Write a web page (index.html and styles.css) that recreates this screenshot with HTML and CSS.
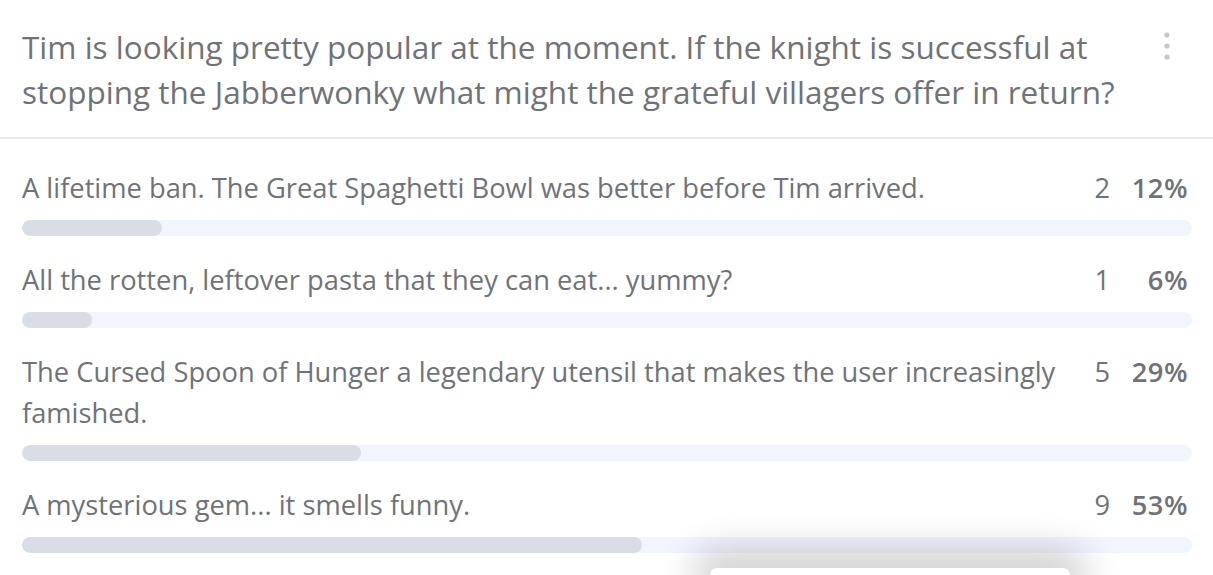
FILE: index.html
```html
<!DOCTYPE html>
<html lang="en">
<head>
<meta charset="utf-8">
<title>Poll</title>
<link rel="stylesheet" href="styles.css">
</head>
<body>
<div class="poll">
  <div class="poll-header">
    <p class="question">Tim is looking pretty popular at the moment. If the knight is successful at stopping the Jabberwonky what might the grateful villagers offer in return?</p>
    <button class="menu" aria-label="More options">
      <svg width="8" height="30" viewBox="0 0 8 30"><circle cx="4" cy="4" r="2.6"/><circle cx="4" cy="15" r="2.6"/><circle cx="4" cy="26" r="2.6"/></svg>
    </button>
  </div>
  <ul class="options">
    <li class="option">
      <div class="option-row">
        <span class="option-text">A lifetime ban. The Great Spaghetti Bowl was better before Tim arrived.</span>
        <span class="count">2</span>
        <span class="pct">12%</span>
      </div>
      <div class="track"><div class="fill" style="width:12%"></div></div>
    </li>
    <li class="option">
      <div class="option-row">
        <span class="option-text">All the rotten, leftover pasta that they can eat... yummy?</span>
        <span class="count">1</span>
        <span class="pct">6%</span>
      </div>
      <div class="track"><div class="fill" style="width:6%"></div></div>
    </li>
    <li class="option">
      <div class="option-row">
        <span class="option-text">The Cursed Spoon of Hunger a legendary utensil that makes the user increasingly famished.</span>
        <span class="count">5</span>
        <span class="pct">29%</span>
      </div>
      <div class="track"><div class="fill" style="width:29%"></div></div>
    </li>
    <li class="option">
      <div class="option-row">
        <span class="option-text">A mysterious gem... it smells funny.</span>
        <span class="count">9</span>
        <span class="pct">53%</span>
      </div>
      <div class="track"><div class="fill" style="width:53%"></div></div>
    </li>
  </ul>
</div>
<div class="popup"></div>
</body>
</html>
```
FILE: styles.css
```css
* { box-sizing: border-box; }
html, body {
  margin: 0;
  padding: 0;
  background: #ffffff;
  height: 100%;
  overflow: hidden;
}
body {
  font-family: "Open Sans", "Liberation Sans", sans-serif;
  color: #6f7378;
  position: relative;
}
.poll-header {
  display: flex;
  align-items: flex-start;
  padding: 24px 20px 23px 22px;
  border-bottom: 2px solid #ebebeb;
}
.question {
  flex: 1;
  margin: 0;
  font-size: 31.5px;
  line-height: 45px;
  max-width: 1110px;
}
.menu {
  margin-left: auto;
  margin-top: 7px;
  border: 0;
  background: none;
  padding: 0 22px 0 0;
  fill: #c3c6ca;
  display: flex;
}
.options {
  list-style: none;
  margin: 0;
  padding: 28px 21px 0 22px;
}
.option {
  margin-bottom: 23px;
}
.option-row {
  display: flex;
  align-items: flex-start;
  font-size: 27.3px;
  line-height: 41px;
  padding-right: 4px;
}
.option-text {
  flex: 1;
  padding-right: 20px;
}
.count {
  width: 30px;
  text-align: right;
}
.pct {
  width: 78px;
  text-align: right;
  font-weight: 600;
  letter-spacing: 0.5px;
}
.track {
  margin-top: 12px;
  height: 16px;
  border-radius: 8px;
  background: #f1f5fd;
  overflow: hidden;
}
.fill {
  height: 100%;
  border-radius: 8px;
  background: #d9dde6;
}
.popup {
  position: absolute;
  left: 710px;
  top: 568px;
  width: 360px;
  height: 7px;
  background: #ffffff;
  border-radius: 8px 8px 0 0;
  box-shadow: 0 -2px 36px 16px rgba(0, 0, 0, 0.2);
}
```
